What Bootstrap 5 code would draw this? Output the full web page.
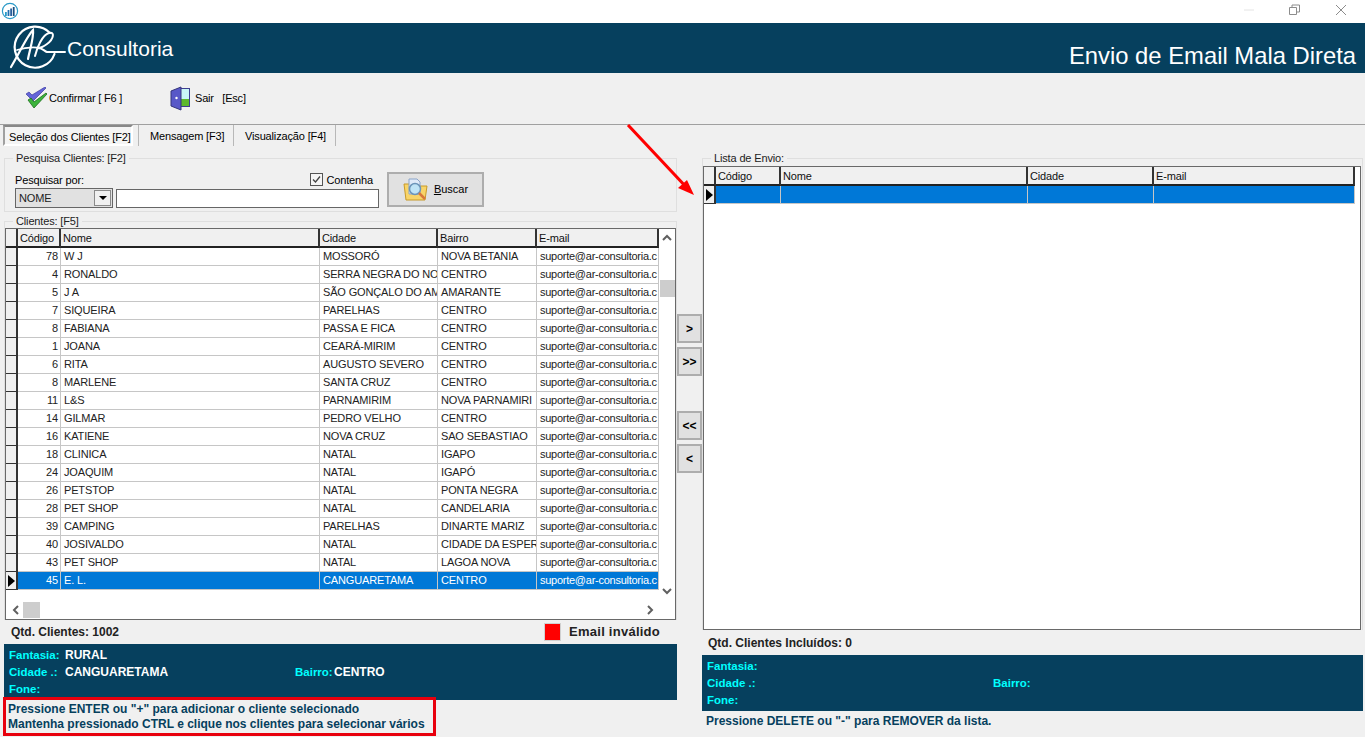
<!DOCTYPE html>
<html lang="pt-BR">
<head>
<meta charset="utf-8">
<title>Envio de Email Mala Direta</title>
<link href="https://cdn.jsdelivr.net/npm/bootstrap@5.3.0/dist/css/bootstrap.min.css" rel="stylesheet">
<style>
html,body{height:737px;overflow:hidden}
body{background:#f0f0f0;color:#000;font-family:"Liberation Sans",Arial,sans-serif;font-size:11px;line-height:14px;position:relative;letter-spacing:-.15px}
.titlebar{height:23px;background:#fff}
.restore-ic{margin-left:34px}
.close-ic{margin:4px 18px 0 34px}
.hdr{height:50px;background:#06405e;color:#fff;letter-spacing:0}
.logotxt{font-size:21px;line-height:24px;margin-left:1px;margin-top:1px}
.hdrtitle{font-size:23.800px;line-height:28px;margin:19px 9px 0 0}
.toolbar{height:52px;border-bottom:1px solid #a0a0a0;padding-left:25px}
.toolitem{display:flex;align-items:center;height:26px;margin-top:12px;letter-spacing:-.2px}
.toolitem-a{width:145px}
.sairtxt{margin-left:4px}
.tabstrip{height:21px;padding-left:3px;flex-wrap:nowrap;align-items:stretch}
.tabstrip .tabitem{padding:4px 0 0 11px;border-right:1px solid #b8b8b8;color:#000;white-space:nowrap}
.tabstrip .tab2{width:96px;border-left:1px solid #b8b8b8}
.tabstrip .tab3{width:102px}
.tabstrip .tabon{width:130px;border:2px solid;border-color:#888 #fff #fff #a0a0a0;background:#f4f4f4;margin-right:5px;height:21px;padding:3px 0 0 4px;background-image:radial-gradient(#d8d8d8 .5px,transparent .6px);background-size:2px 2px}
.leftcol{width:677px;padding-left:4px;flex:none}
.midcol{width:25px;flex:none;padding-top:168px}
.rightcol{width:661px;flex:none}
.grpbox{border:1px solid #dfdfdf;padding:0;margin:0;min-width:0}
.grpbox legend{float:none;width:auto;font-size:11px;line-height:14px;margin:0 0 0 8px;padding:0 3px;color:#222}
.grp1{margin-top:5px;height:61px}
.grp2{margin-top:2px;height:406px;border-bottom:0}
.grp3{margin-top:5px;height:479px;border-bottom:0}
.frm{border:1px solid #696969;background:#fff;display:grid;overflow:hidden}
.frm-l{height:392px;grid-template-columns:653px 16px;grid-template-rows:371px 19px}
.frm-r{height:464px;margin-top:1px;margin-right:1px}
.gridtbl{table-layout:fixed;border-collapse:separate;border-spacing:0;margin:0}
.gridtbl-r{width:651px}
.gridtbl.table>:not(caption)>*>*{padding:0 3px;height:18px;line-height:17px;background:#fff;color:#222;box-shadow:none;border:0;border-right:1px solid #c6c6c6;border-bottom:1px solid #c6c6c6;white-space:nowrap;overflow:hidden;font-size:11px}
.gridtbl.table>thead>tr>th{background:#f0f0f0;font-weight:400;color:#111;border-right:2px solid #333;border-bottom:2px solid #222;padding:2px 2px 0;line-height:15px}
.gridtbl.table>tbody>tr>td.ind{background:#f0f0f0;border-right:2px solid #333;border-bottom:1px solid #333;padding:0;position:relative}
.gridtbl.table>tbody>tr.sel>td{background:#0078d7;color:#fff}
.gridtbl.table>tbody>tr.sel>td.ind{background:#f0f0f0}
.gridtbl.table>tbody>tr>td.num{text-align:right;padding-right:2px}
.gridtbl.table>tbody>tr>td.mailcel{letter-spacing:-.26px}
.ptr{display:block;width:0;height:0;border-left:7px solid #000;border-top:6px solid transparent;border-bottom:6px solid transparent;margin:3px 0 0 2px}
.vbar{display:flex;flex-direction:column;align-items:center;background:#fff;height:371px}
.vthumb{width:15px;height:17px;background:#cdcdcd;margin-top:37px}
.hbar{grid-column:1/3;display:flex;align-items:center;background:#fff;padding:0 20px 0 5px}
.hthumb{width:17px;height:16px;background:#cdcdcd;margin-left:2px}
.statrow{display:flex;align-items:center;justify-content:space-between;font-weight:700;color:#222;font-size:12px;letter-spacing:0}
.stat-l{height:24px;padding:0 17px 0 7px}
.stat-r{height:25px;padding:0 0 0 6px}
.redsq{width:17px;height:18px;background:#f00;border:1px solid #d0d0d0;margin-right:8px}
.invtxt{font-size:13px;letter-spacing:.25px}
.infopanel{background:#06405e;height:56px;padding:3px 0 0 5px;color:#fff;font-weight:700;font-size:12px;letter-spacing:0}
.inforow{display:flex;height:17px;line-height:17px}
.inforow .lbl{color:#0ff;width:56px;flex:none;font-size:11.500px}
.inforow .val{width:230px;flex:none}
.inforow .lbl2{color:#0ff;width:39px;flex:none;font-size:11.500px}
.hintbox{border:3px solid #e8000d;width:433px;height:39px;margin:-3px 0 0 -1px;padding:2px 0 0 2px;color:#06405e;font-weight:700;font-size:12px;line-height:15px;position:relative;white-space:nowrap;letter-spacing:0}
.hintplain{color:#06405e;font-weight:700;font-size:12px;padding:2px 0 0 4px;line-height:16px;letter-spacing:0}
.winbtn.btn{--bs-btn-border-radius:0;background:#e1e1e1;border:2px solid #adadad;color:#000;padding:0;display:flex;align-items:center;justify-content:center;font-size:12px;font-weight:700;width:25px;height:29px;margin-bottom:4px;line-height:1}
.gap35{margin-top:35px}
.busca.btn{--bs-btn-border-radius:0;background:#e1e1e1;border:2px solid #adadad;color:#000;padding:0;width:97px;height:35px;font-size:11px;font-weight:400;display:flex;align-items:center;justify-content:center;gap:5px;margin:7px 0 0 7px}
.srchcol{width:365px;margin-left:10px}
.srchtop{height:23px}
.srchlbl{margin-top:6px}
.srchchk{margin-right:7px;margin-top:6px}
.combo{width:98px;height:20px;border:1px solid #666;background:#e1e1e1;display:flex;align-items:center;justify-content:space-between;padding:0 1px 0 3px;font-size:11px;color:#222}
.combobtn{width:17px;height:16px;background:#f0f0f0;border:1px solid #8a8a8a;display:flex;align-items:center;justify-content:center}
.combobtn i{display:block;width:0;height:0;border-top:4px solid #000;border-left:4px solid transparent;border-right:4px solid transparent}
.srchin.form-control{width:263px;height:19px;min-height:0;padding:0 3px;border:1px solid #666;border-radius:0;margin-left:3px;flex:none;font-size:11px;margin-top:1px}
.chkbox{width:13px;height:13px;border:1px solid #555;background:#f6f6f6;display:flex;align-items:center;justify-content:center;margin-right:3px}
.arrowover{position:absolute;left:620px;top:118px;pointer-events:none}
</style>
</head>
<body>
<div class="titlebar d-flex align-items-start justify-content-between">
  <svg width="20" height="21" viewBox="0 0 20 21"><circle cx="10" cy="11" r="7.600" fill="#fff" stroke="#2a9ac8" stroke-width="1.200"/><rect x="5" y="12" width="1.800" height="4" fill="#2a9ac8"/><rect x="7.600" y="10" width="1.800" height="6" fill="#1f6fb0"/><rect x="10.200" y="8.500" width="1.800" height="7.500" fill="#2a5f9c"/><rect x="12.800" y="7" width="1.800" height="9" fill="#1b4f80"/></svg>
  <div class="d-flex align-items-center">
    <svg width="12" height="12" viewBox="0 0 12 12" class="mt-1"><path d="M1 6h10" stroke="#e4e4e4"/></svg>
    <svg width="12" height="12" viewBox="0 0 12 12" class="mt-1 restore-ic"><path d="M.5 3.500h7v7h-7zM3 3.500V1h7.500v7H7.500" fill="none" stroke="#8c8c8c"/></svg>
    <svg width="12" height="12" viewBox="0 0 12 12" class="mt-1 close-ic"><path d="M1 1l10 10M11 1L1 11" stroke="#8c8c8c"/></svg>
  </div>
</div>
<div class="hdr d-flex justify-content-between">
  <div class="d-flex align-items-center">
    <svg width="66" height="50" viewBox="0 0 66 50">
      <g fill="none" stroke="#fff" stroke-linecap="round">
        <path d="M50 10A20.500 20.500 0 1 0 54.500 31" stroke-width="2.200"/>
        <path d="M11 44C19 31 27 13 33 7c1 7-3 19-5 29" stroke-width="2.200"/>
        <path d="M17 27c9-3 18-3 24-2" stroke-width="1.800"/>
        <path d="M35 33c2-8 7-21 14-23 6-2 5 6-2 11-4 3-7 4-9 4 5 0 6 3 9 4h18" stroke-width="2"/>
      </g>
    </svg>
    <span class="logotxt">Consultoria</span>
  </div>
  <div class="hdrtitle">Envio de Email Mala Direta</div>
</div>
<div class="toolbar d-flex">
  <div class="toolitem toolitem-a">
    <svg width="24" height="22" viewBox="0 0 24 22"><path d="M1 7l3-2 3 3L20 0l1 1L8 14z" fill="#6464d8" stroke="#3c3ca0" stroke-width=".7"/><path d="M3 13l3-2 3 4L21 6l1 1L9 21z" fill="#3cb43c" stroke="#1c6c1c" stroke-width=".8"/></svg>
    <span>Confirmar [ F6 ]</span>
  </div>
  <div class="toolitem">
    <svg width="21" height="25" viewBox="0 0 21 25"><rect x="9.500" y="2.500" width="10" height="18" fill="#c8f6f6" stroke="#3e3e90"/><rect x="10" y="13" width="9" height="7" fill="#5cb82c"/><path d="M1 5l10-4v23L1 20z" fill="#5858c8" stroke="#34347c"/><circle cx="6.500" cy="12" r="1.200" fill="#fff"/></svg>
    <span class="sairtxt">Sair&nbsp;&nbsp; [Esc]</span>
  </div>
</div>
<ul class="nav tabstrip">
  <li class="tabitem tabon">Seleção dos Clientes [F2]</li>
  <li class="tabitem tab2">Mensagem [F3]</li>
  <li class="tabitem tab3">Visualização [F4]</li>
</ul>
<div class="d-flex">
  <div class="leftcol">
    <fieldset class="grpbox grp1">
      <legend>Pesquisa Clientes: [F2]</legend>
      <div class="d-flex">
        <div class="srchcol">
          <div class="srchtop d-flex justify-content-between align-items-center">
            <span class="srchlbl">Pesquisar por:</span>
            <span class="d-flex align-items-center srchchk"><span class="chkbox"><svg width="11" height="11" viewBox="0 0 11 11"><path d="M2 5.500l2.500 2.500L9 2.500" fill="none" stroke="#444" stroke-width="1.300"/></svg></span>Contenha</span>
          </div>
          <div class="d-flex">
            <div class="combo"><span>NOME</span><span class="combobtn"><i></i></span></div>
            <input class="form-control srchin" type="text">
          </div>
        </div>
        <button class="btn busca" type="button">
          <svg width="26" height="25" viewBox="0 0 26 25"><path d="M1 7h9l2 2h12l-2 14H3z" fill="#f8d468" stroke="#c89a28"/><path d="M6 2h8l3 3v12H6z" fill="#dfeaf8" stroke="#8ba4c8"/><circle cx="12" cy="12" r="5.500" fill="#bfe4f6" stroke="#6c94b8" stroke-width="1.500"/><path d="M16 16l6 6" stroke="#d8783c" stroke-width="2.500"/></svg>
          <span><u>B</u>uscar</span>
        </button>
      </div>
    </fieldset>
    <fieldset class="grpbox grp2">
      <legend>Clientes: [F5]</legend>
      <div class="frm frm-l">
        <div class="overflow-hidden">
          <table class="table gridtbl">
            <colgroup><col style="width:12px"><col style="width:43px"><col style="width:259px"><col style="width:118px"><col style="width:99px"><col style="width:122px"></colgroup>
            <thead><tr><th></th><th>Código</th><th>Nome</th><th>Cidade</th><th>Bairro</th><th>E-mail</th></tr></thead>
            <tbody>
              <tr><td class="ind"></td><td class="num">78</td><td>W J</td><td>MOSSORÓ</td><td>NOVA BETANIA</td><td class="mailcel">suporte@ar-consultoria.c</td></tr>
              <tr><td class="ind"></td><td class="num">4</td><td>RONALDO</td><td>SERRA NEGRA DO NO</td><td>CENTRO</td><td class="mailcel">suporte@ar-consultoria.c</td></tr>
              <tr><td class="ind"></td><td class="num">5</td><td>J A</td><td>SÃO GONÇALO DO AM</td><td>AMARANTE</td><td class="mailcel">suporte@ar-consultoria.c</td></tr>
              <tr><td class="ind"></td><td class="num">7</td><td>SIQUEIRA</td><td>PARELHAS</td><td>CENTRO</td><td class="mailcel">suporte@ar-consultoria.c</td></tr>
              <tr><td class="ind"></td><td class="num">8</td><td>FABIANA</td><td>PASSA E FICA</td><td>CENTRO</td><td class="mailcel">suporte@ar-consultoria.c</td></tr>
              <tr><td class="ind"></td><td class="num">1</td><td>JOANA</td><td>CEARÁ-MIRIM</td><td>CENTRO</td><td class="mailcel">suporte@ar-consultoria.c</td></tr>
              <tr><td class="ind"></td><td class="num">6</td><td>RITA</td><td>AUGUSTO SEVERO</td><td>CENTRO</td><td class="mailcel">suporte@ar-consultoria.c</td></tr>
              <tr><td class="ind"></td><td class="num">8</td><td>MARLENE</td><td>SANTA CRUZ</td><td>CENTRO</td><td class="mailcel">suporte@ar-consultoria.c</td></tr>
              <tr><td class="ind"></td><td class="num">11</td><td>L&amp;S</td><td>PARNAMIRIM</td><td>NOVA PARNAMIRI</td><td class="mailcel">suporte@ar-consultoria.c</td></tr>
              <tr><td class="ind"></td><td class="num">14</td><td>GILMAR</td><td>PEDRO VELHO</td><td>CENTRO</td><td class="mailcel">suporte@ar-consultoria.c</td></tr>
              <tr><td class="ind"></td><td class="num">16</td><td>KATIENE</td><td>NOVA CRUZ</td><td>SAO SEBASTIAO</td><td class="mailcel">suporte@ar-consultoria.c</td></tr>
              <tr><td class="ind"></td><td class="num">18</td><td>CLINICA</td><td>NATAL</td><td>IGAPO</td><td class="mailcel">suporte@ar-consultoria.c</td></tr>
              <tr><td class="ind"></td><td class="num">24</td><td>JOAQUIM</td><td>NATAL</td><td>IGAPÓ</td><td class="mailcel">suporte@ar-consultoria.c</td></tr>
              <tr><td class="ind"></td><td class="num">26</td><td>PETSTOP</td><td>NATAL</td><td>PONTA NEGRA</td><td class="mailcel">suporte@ar-consultoria.c</td></tr>
              <tr><td class="ind"></td><td class="num">28</td><td>PET SHOP</td><td>NATAL</td><td>CANDELARIA</td><td class="mailcel">suporte@ar-consultoria.c</td></tr>
              <tr><td class="ind"></td><td class="num">39</td><td>CAMPING</td><td>PARELHAS</td><td>DINARTE MARIZ</td><td class="mailcel">suporte@ar-consultoria.c</td></tr>
              <tr><td class="ind"></td><td class="num">40</td><td>JOSIVALDO</td><td>NATAL</td><td>CIDADE DA ESPER</td><td class="mailcel">suporte@ar-consultoria.c</td></tr>
              <tr><td class="ind"></td><td class="num">43</td><td>PET SHOP</td><td>NATAL</td><td>LAGOA NOVA</td><td class="mailcel">suporte@ar-consultoria.c</td></tr>
              <tr class="sel"><td class="ind"><span class="ptr"></span></td><td class="num">45</td><td>E. L.</td><td>CANGUARETAMA</td><td>CENTRO</td><td class="mailcel">suporte@ar-consultoria.c</td></tr>
            </tbody>
          </table>
        </div>
        <div class="vbar">
          <svg class="mt-1" width="12" height="10" viewBox="0 0 12 10"><path d="M2 7l4-4 4 4" fill="none" stroke="#606060" stroke-width="2"/></svg>
          <div class="vthumb"></div>
          <svg class="mt-auto mb-1" width="12" height="10" viewBox="0 0 12 10"><path d="M2 3l4 4 4-4" fill="none" stroke="#606060" stroke-width="2"/></svg>
        </div>
        <div class="hbar">
          <svg width="10" height="12" viewBox="0 0 10 12"><path d="M7 2L3 6l4 4" fill="none" stroke="#606060" stroke-width="2"/></svg>
          <div class="hthumb"></div>
          <svg class="ms-auto" width="10" height="12" viewBox="0 0 10 12"><path d="M3 2l4 4-4 4" fill="none" stroke="#606060" stroke-width="2"/></svg>
        </div>
      </div>
    </fieldset>
    <div class="statrow stat-l"><span>Qtd. Clientes: 1002</span><span class="d-flex align-items-center"><span class="redsq"></span><span class="invtxt">Email inválido</span></span></div>
    <div class="infopanel">
      <div class="inforow"><span class="lbl">Fantasia:</span><span class="val">RURAL</span></div>
      <div class="inforow"><span class="lbl">Cidade .:</span><span class="val">CANGUARETAMA</span><span class="lbl2">Bairro:</span><span>CENTRO</span></div>
      <div class="inforow"><span class="lbl">Fone:</span></div>
    </div>
    <div class="hintbox">Pressione ENTER ou "+" para adicionar o cliente selecionado<br>Mantenha pressionado CTRL e clique nos clientes para selecionar vários</div>
  </div>
  <div class="midcol">
    <button class="btn winbtn" type="button">&gt;</button>
    <button class="btn winbtn" type="button">&gt;&gt;</button>
    <button class="btn winbtn gap35" type="button">&lt;&lt;</button>
    <button class="btn winbtn" type="button">&lt;</button>
  </div>
  <div class="rightcol">
    <fieldset class="grpbox grp3">
      <legend>Lista de Envio:</legend>
      <div class="frm frm-r d-block">
        <table class="table gridtbl gridtbl-r">
          <colgroup><col style="width:12px"><col style="width:65px"><col style="width:247px"><col style="width:126px"><col style="width:201px"></colgroup>
          <thead><tr><th></th><th>Código</th><th>Nome</th><th>Cidade</th><th>E-mail</th></tr></thead>
          <tbody><tr class="sel"><td class="ind"><span class="ptr"></span></td><td></td><td></td><td></td><td></td></tr></tbody>
        </table>
      </div>
    </fieldset>
    <div class="statrow stat-r"><span>Qtd. Clientes Incluídos: 0</span></div>
    <div class="infopanel">
      <div class="inforow"><span class="lbl">Fantasia:</span></div>
      <div class="inforow"><span class="lbl">Cidade .:</span><span class="val"></span><span class="lbl2">Bairro:</span></div>
      <div class="inforow"><span class="lbl">Fone:</span></div>
    </div>
    <div class="hintplain">Pressione DELETE ou "-" para REMOVER da lista.</div>
  </div>
</div>
<svg class="arrowover" width="84" height="84" viewBox="0 0 84 84"><path d="M8 7L68 71" stroke="#f00" stroke-width="3"/><path d="M74 77L58 70L67 62Z" fill="#f00"/></svg>
</body>
</html>
